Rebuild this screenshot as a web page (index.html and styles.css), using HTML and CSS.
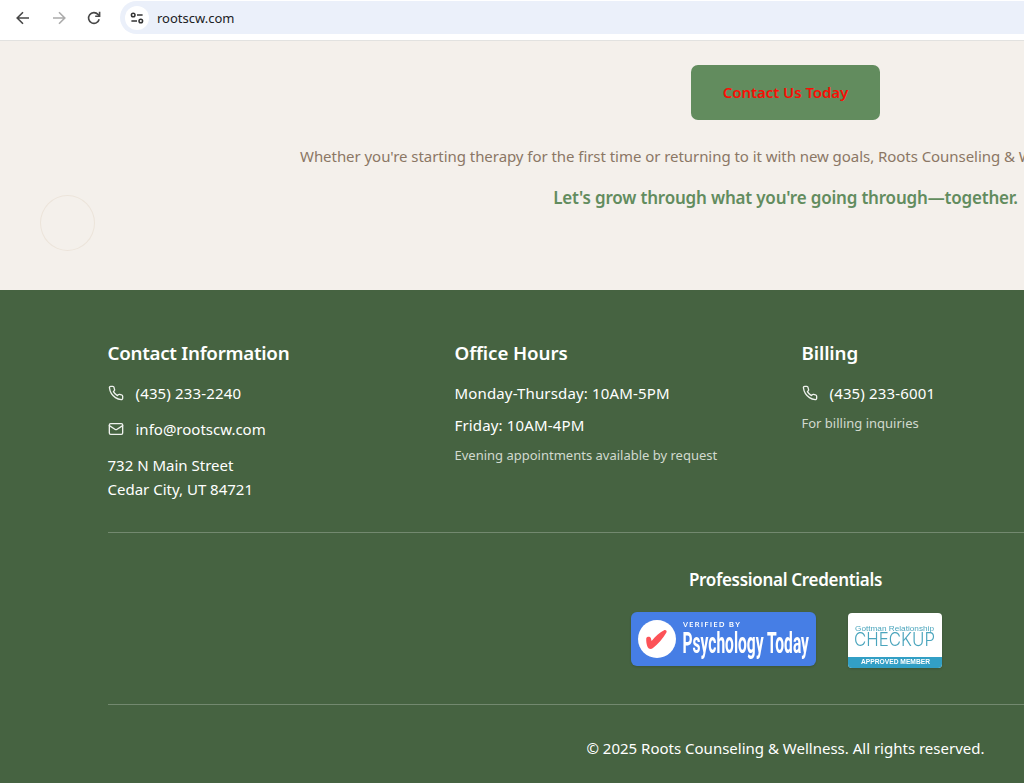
FILE: index.html
```html
<!DOCTYPE html>
<html lang="en">
  <head>
    <meta charset="utf-8" />
    <meta name="viewport" content="width=device-width, initial-scale=1" />
    <link rel="stylesheet" href="styles.css">
    <title>Roots Counseling &amp; Wellness</title>
  </head>
  <body>
    <svg class="symbols" width="0" height="0">
      <symbol id="phone" viewBox="0 0 24 24">
        <path d="M22 16.92v3a2 2 0 0 1-2.18 2 19.79 19.79 0 0 1-8.63-3.07 19.5 19.5 0 0 1-6-6 19.79 19.79 0 0 1-3.07-8.67A2 2 0 0 1 4.11 2h3a2 2 0 0 1 2 1.72 12.84 12.84 0 0 0 .7 2.81 2 2 0 0 1-.45 2.11L8.09 9.91a16 16 0 0 0 6 6l1.27-1.27a2 2 0 0 1 2.11-.45 12.84 12.84 0 0 0 2.81.7A2 2 0 0 1 22 16.92z" />
      </symbol>
      <symbol id="mail" viewBox="0 0 24 24">
        <rect x="2" y="4" width="20" height="16" rx="2" />
        <path d="m22 7-8.97 5.7a1.94 1.94 0 0 1-2.06 0L2 7" />
      </symbol>
    </svg>

    <header class="toolbar">
      <svg class="nav-icon" viewBox="0 0 16 16"><path d="M14 8H2.5M8 2.2 2.2 8 8 13.8" /></svg>
      <svg class="nav-icon disabled" viewBox="0 0 16 16"><path d="M2 8h11.5M8 2.2 13.8 8 8 13.8" /></svg>
      <svg class="nav-icon" viewBox="0 0 16 16">
        <path d="M13.2 9.3A5.4 5.4 0 1 1 12 4.4L13.4 6" />
        <path d="M13.6 1.8v4.4H9.2" />
      </svg>
      <div class="address-bar">
        <span class="site-info">
          <svg viewBox="0 0 14 12">
            <circle cx="3.2" cy="3" r="1.8" />
            <path d="M7 3h5.6M1.4 9H7" />
            <circle cx="10.8" cy="9" r="1.8" />
          </svg>
        </span>
        <span class="url">rootscw.com</span>
      </div>
    </header>

    <div class="page">
      <main class="cta">
        <a class="button" href="#"><span>Contact Us Today</span></a>
        <p class="lead">Whether you're starting therapy for the first time or returning to it with new goals, Roots Counseling &amp; Wellness is here to support you.</p>
        <p class="tagline">Let's grow through what you're going through—together.</p>
        <span class="ring"></span>
      </main>

      <footer class="footer">
        <div class="columns">
          <section class="contact">
            <h3 class="contact-title">Contact Information</h3>
            <p class="row phone"><svg class="icon"><use href="#phone" /></svg>(435) 233-2240</p>
            <p class="row email"><svg class="icon"><use href="#mail" /></svg>info@rootscw.com</p>
            <p class="street">732 N Main Street<br>Cedar City, UT 84721</p>
          </section>
          <section class="hours">
            <h3>Office Hours</h3>
            <p class="time">Monday-Thursday: 10AM-5PM</p>
            <p class="time">Friday: 10AM-4PM</p>
            <p class="note">Evening appointments available by request</p>
          </section>
          <section class="billing">
            <h3>Billing</h3>
            <p class="row phone"><svg class="icon"><use href="#phone" /></svg>(435) 233-6001</p>
            <p class="note">For billing inquiries</p>
          </section>
        </div>

        <div class="credentials">
          <h4>Professional Credentials</h4>
          <div class="badges">
            <svg class="badge-pt" viewBox="0 0 185 54">
              <rect width="185" height="54" rx="6" fill="#467ee5" />
              <circle cx="26" cy="27" r="19" fill="#fff" />
              <path d="M15.3 26c1-1.700 3.700-1.700 4.500 0l.8 3c3.500-4.500 8-8.600 12.500-10.800 1.600-.7 3.200.7 2.300 2.300-3.200 5.700-8.400 11.600-13.400 15.600-2 1.500-4.400 1-5.400-1-1-2.400-1.700-6.300-1.300-9.100z" fill="#fc5257" />
              <text class="pt-small" x="52" y="15" textLength="58" lengthAdjust="spacingAndGlyphs">VERIFIED BY</text>
              <text class="pt-large" transform="translate(51.5 41) scale(.58 1)" textLength="218" lengthAdjust="spacingAndGlyphs">Psychology Today</text>
            </svg>
            <svg class="badge-gottman" viewBox="0 0 94 55">
              <rect width="94" height="55" rx="4" fill="#fff" />
              <path d="M0 44h94v7a4 4 0 0 1-4 4H4a4 4 0 0 1-4-4z" fill="#329fc5" />
              <text class="gt-small" x="7" y="17.5" textLength="79" lengthAdjust="spacingAndGlyphs">Gottman Relationship</text>
              <text class="gt-large" x="6" y="33" textLength="81" lengthAdjust="spacingAndGlyphs">CHECKUP</text>
              <text class="gt-member" x="13" y="51.3" textLength="69" lengthAdjust="spacingAndGlyphs">APPROVED MEMBER</text>
            </svg>
          </div>
        </div>

        <p class="copyright">© 2025 Roots Counseling &amp; Wellness. All rights reserved.</p>
      </footer>
    </div>
  </body>
</html>
```
FILE: styles.css
```css
:root {
  --cream: #f4f0eb;
  --green: #628c5e;
  --forest: #466341;
  --rule: #73896f;
}

* {
  box-sizing: border-box;
}

body {
  margin: 0;
  height: 783px;
  overflow: hidden;
  background: var(--forest);
  font-family: "Segoe UI", "Noto Sans", sans-serif;
  font-size: 15px;
  line-height: 24px;
}

h3,
h4,
p {
  margin: 0;
}

.symbols {
  position: absolute;
}

/* Browser toolbar */

.toolbar {
  display: flex;
  align-items: flex-start;
  height: 41px;
  padding: 1px 0 0 15px;
  background: #fff;
  border-bottom: 1px solid #e2e2e0;
}

.nav-icon {
  flex: none;
  width: 16px;
  height: 16px;
  margin: 9px 19.5px 0 0;
  fill: none;
  stroke: #474747;
  stroke-width: 1.6;

  &.disabled {
    stroke: #ababab;
  }
}

.address-bar {
  display: flex;
  flex: 1;
  align-items: center;
  height: 33px;
  margin-left: -1.5px;
  padding-left: 5px;
  background: #ebf0fa;
  border-radius: 17px 0 0 17px;
}

.site-info {
  display: grid;
  place-items: center;
  width: 24px;
  height: 24px;
  border-radius: 50%;
  background: #fff;

  & svg {
    width: 14px;
    height: 12px;
    fill: none;
    stroke: #333;
    stroke-width: 1.5;
  }
}

.url {
  margin-left: 8px;
  color: #202124;
  font-size: 13px;
}

/* The page is wider than the window and runs off to the right */

.page {
  width: 1571px;
}

.cta {
  position: relative;
  display: flex;
  flex-direction: column;
  align-items: center;
  height: 249px;
  padding-top: 24px;
  background: var(--cream);
}

.button {
  display: grid;
  place-items: center;
  width: 189px;
  height: 55px;
  padding-bottom: 2px;
  border-radius: 7px;
  background: var(--green);
  color: #f80f05;
  font-weight: 600;
  letter-spacing: -0.06px;
  text-decoration: none;
}

.lead {
  width: 971px;
  margin-top: 24px;
  color: #8b7765;
  letter-spacing: -0.05px;
  white-space: nowrap;
}

.tagline {
  margin-top: 16px;
  color: var(--green);
  font-size: 17px;
  font-weight: 600;
  letter-spacing: -0.19px;
  line-height: 28px;
}

.ring {
  position: absolute;
  top: 154px;
  left: 40px;
  width: 55px;
  height: 56px;
  border: 1px solid #ece4da;
  border-radius: 50%;
}

/* Footer */

.footer {
  padding: 48px 107.5px 0;
  background: var(--forest);
  color: #fff;
}

.columns {
  display: grid;
  grid-template-columns: repeat(4, 1fr);
  gap: 32px;
  height: 195px;
  border-bottom: 1px solid var(--rule);

  & h3 {
    margin-bottom: 14px;
    padding-top: 1px;
    font-size: 18.75px;
    font-weight: 600;
    letter-spacing: -0.1px;
    line-height: 28px;
  }

  & .contact-title {
    letter-spacing: -0.27px;
  }
}

.row {
  display: flex;
  align-items: center;
  gap: 12px;
}

.phone,
.time {
  letter-spacing: 0.15px;
}

.icon {
  width: 16px;
  height: 16px;
  fill: none;
  stroke: #eef1ed;
  stroke-width: 2;
  stroke-linecap: round;
  stroke-linejoin: round;
}

.contact .row {
  margin-bottom: 12px;
}

.hours p,
.billing .row {
  margin-bottom: 8px;
}

.note {
  color: #d2dacf;
  font-size: 13px;
  line-height: 20px;
}

.credentials {
  display: flex;
  flex-direction: column;
  align-items: center;
  height: 172px;
  padding-top: 33px;
  border-bottom: 1px solid var(--rule);

  & h4 {
    font-size: 17px;
    font-weight: 600;
    letter-spacing: -0.3px;
    line-height: 28px;
  }
}

.badges {
  display: flex;
  gap: 32px;
  margin-top: 18px;
  padding-left: 2px;
}

.badge-pt {
  width: 185px;
  height: 54px;
  filter: drop-shadow(0 1px 1px rgb(0 0 0 / 0.15));
}

.badge-gottman {
  width: 94px;
  height: 55px;
  margin-top: 1px;
  filter: drop-shadow(0 1px 1px rgb(0 0 0 / 0.15));
}

.badges text {
  fill: #fff;
}

.pt-small {
  font: 600 7.5px "Open Sans", sans-serif;
  letter-spacing: 1px;
}

.pt-large {
  font: 700 29px Roboto, sans-serif;
}

.badges .gt-small,
.badges .gt-large {
  font: 8px "Liberation Sans", sans-serif;
  fill: #4ba5bd;
}

.badges .gt-large {
  font: 300 18px Inter, sans-serif;
}

.gt-member {
  font: 700 6.5px "Liberation Sans", sans-serif;
}

.copyright {
  margin-top: 31px;
  text-align: center;
}
```
